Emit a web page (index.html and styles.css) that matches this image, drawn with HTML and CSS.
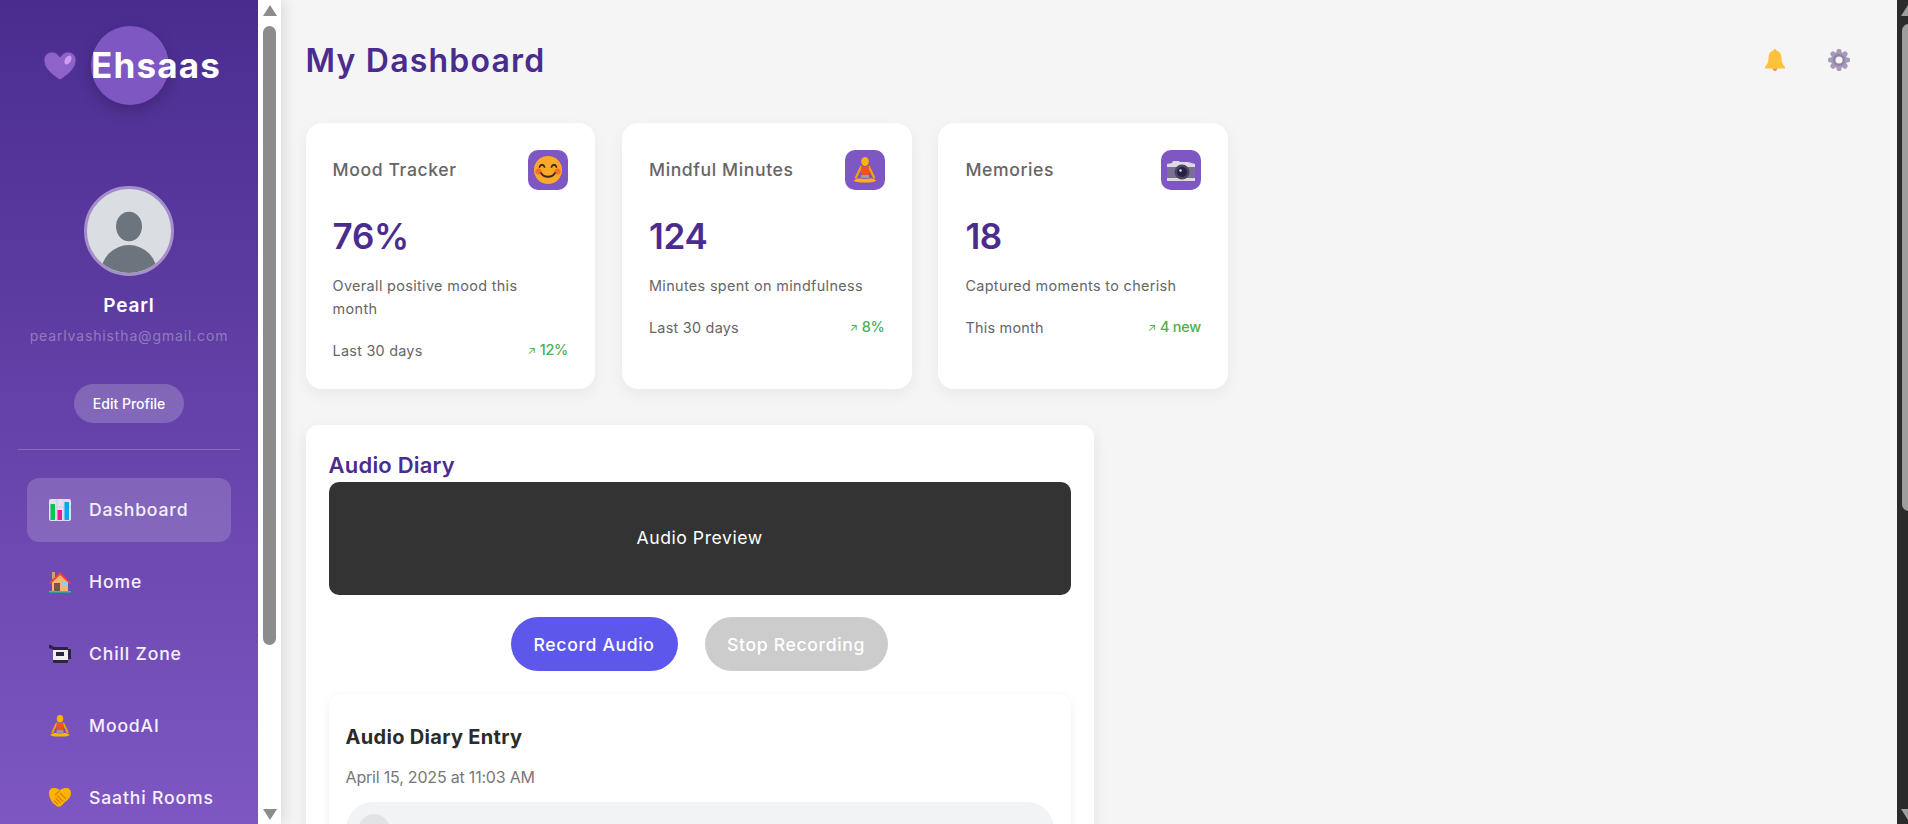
FILE: index.html
```html
<!DOCTYPE html>
<html lang="en">
<head>
  <meta charset="UTF-8">
  <meta name="viewport" content="width=device-width, initial-scale=1">
  <title>Ehsaas - My Dashboard</title>
  <link rel="stylesheet" href="styles.css">
</head>
<body>
  <svg class="defs" width="0" height="0">
    <symbol id="i-med" viewBox="4 3 24 26">
      <ellipse cx="16" cy="7.500" rx="3.800" ry="4.500" fill="#ffb300"/>
      <path d="M12 13 7 23.500" stroke="#ffa000" stroke-width="2.200" stroke-linecap="round"/>
      <path d="M20 13 25 23.500" stroke="#ffa000" stroke-width="2.200" stroke-linecap="round"/>
      <rect x="12" y="12.500" width="8" height="9" rx="1" fill="#f4511e"/>
      <rect x="12" y="21" width="8" height="3" fill="#9e9e9e"/>
      <path d="M4.500 26.500c3-2.500 7-2.500 11.500-1.500 4.500-1 8.500-1 11.500 1.500-3 2-7 2-11.500 2s-8.500 0-11.500-2z" fill="#ffb300"/>
    </symbol>
  </svg>

  <div class="side-wrap">
    <aside class="sidebar">
      <div class="logo">
        <svg class="logo-heart" viewBox="0 0 34 30">
          <path d="M17 29C8 23 1 17 1 9c0-5 4-8 8-8 3 0 6 2 8 5 2-3 5-5 8-5 4 0 8 3 8 8 0 8-7 14-16 20z" fill="#8e63c9" stroke="#5b36a8"/>
          <ellipse cx="25" cy="9" rx="3" ry="5" transform="rotate(30 25 9)" fill="#ce9df0"/>
        </svg>
        <div class="logo-mark"><span class="logo-text">Ehsaas</span></div>
      </div>

      <div class="profile">
        <div class="avatar">
          <svg viewBox="0 0 84 84">
            <ellipse cx="42" cy="37.500" rx="13" ry="14.700" fill="#6c757d"/>
            <circle cx="42" cy="84" r="28" fill="#6c757d"/>
          </svg>
        </div>
        <div class="name">Pearl</div>
        <div class="email">pearlvashistha@gmail.com</div>
        <button class="edit-btn">Edit Profile</button>
      </div>

      <nav class="nav">
        <a class="nav-item active">
          <svg class="nav-icon" viewBox="0 0 22 22">
            <rect width="22" height="22" rx="2" fill="#e4dff0"/>
            <path d="M0 8h22M8 0v22M15 0v22" stroke="#cfc8de" stroke-width="1"/>
            <rect x="1.500" y="5" width="4.500" height="16" fill="#00c853"/>
            <rect x="8.500" y="11" width="4.500" height="10" fill="#e91e8c"/>
            <rect x="15.500" y="3" width="4.500" height="18" fill="#03a9f4"/>
          </svg>
          <span>Dashboard</span>
        </a>
        <a class="nav-item">
          <svg class="nav-icon" viewBox="0 0 22 22">
            <rect x="3" y="1" width="3" height="7" fill="#d9a066"/>
            <path d="M3 10 11 3l8 7v10H3z" fill="#f3b574"/>
            <path d="M0 12 11 1l11 11-1.500 1L11 4 1.500 13z" fill="#f44336"/>
            <rect x="5" y="12" width="6" height="8" fill="#795548"/>
            <rect x="13" y="11" width="5" height="4" fill="#81d4fa"/>
            <rect y="20" width="22" height="1.500" fill="#00e676"/>
          </svg>
          <span>Home</span>
        </a>
        <a class="nav-item">
          <svg class="nav-icon" viewBox="0 0 22 22">
            <path d="M0 2h2l3 2v3L0 5z" fill="#2d2440"/>
            <rect x="4" y="4" width="15" height="16" rx="1" fill="#2d2440"/>
            <rect x="4" y="7" width="15" height="10" fill="#f0eef5"/>
            <rect x="7" y="9" width="8" height="4" fill="#2d2440"/>
            <rect x="19" y="6" width="3" height="10" fill="#2d2440"/>
          </svg>
          <span>Chill Zone</span>
        </a>
        <a class="nav-item">
          <svg class="nav-icon"><use href="#i-med"/></svg>
          <span>MoodAI</span>
        </a>
        <a class="nav-item">
          <svg class="nav-icon" viewBox="0 0 22 22">
            <path d="M0 6c0-3 2-5 5-5 3 0 4 1 6 2 2-1 3-2 6-2 3 0 5 2 5 5 0 4-3 7-6 9l-4 4c-1.500 1-3 1-4.500 0L4 16C2 14 0 10 0 6z" fill="#ffb300"/>
            <path d="M6 8l5-4.500M11 6l6 6M8 8.500l6 6M6.500 11l5 5M5 13.500l4 4" stroke="#d98200" stroke-width="1.200" fill="none"/>
          </svg>
          <span>Saathi Rooms</span>
        </a>
      </nav>
    </aside>
    <div class="scroll scroll-light">
      <i class="arrow up"></i>
      <div class="thumb"></div>
      <i class="arrow down"></i>
    </div>
  </div>

  <main class="main">
    <header class="topbar">
      <h1>My Dashboard</h1>
      <div class="top-icons">
        <svg class="top-icon" viewBox="0 0 22 22">
          <path d="M11 0c1 0 1.500.6 1.500 1.500C16 2.500 17.500 5.500 17.500 9c0 4 1 6 3.500 9v1.500H1V18c2.500-3 3.500-5 3.500-9 0-3.500 1.500-6.500 5-7.500C9.500.6 10 0 11 0z" fill="#fdc13a"/>
          <path d="M8.500 19.500h5C13 21 12 22 11 22s-2-1-2.500-2.500z" fill="#f9882c"/>
        </svg>
        <svg class="top-icon" viewBox="0 0 22 22">
          <g fill="#a69ab8">
            <circle cx="11" cy="11" r="8"/>
            <rect x="8.500" y="0" width="5" height="22" rx="2"/>
            <rect x="8.500" y="0" width="5" height="22" rx="2" transform="rotate(45 11 11)"/>
            <rect x="8.500" y="0" width="5" height="22" rx="2" transform="rotate(90 11 11)"/>
            <rect x="8.500" y="0" width="5" height="22" rx="2" transform="rotate(135 11 11)"/>
          </g>
          <circle cx="11" cy="11" r="6" fill="#8f82a6"/>
          <circle cx="11" cy="11" r="3.600" fill="#f5f5f5"/>
        </svg>
      </div>
    </header>

    <section class="cards">
      <div class="card">
        <div class="card-head">
          <span class="card-title">Mood Tracker</span>
          <span class="card-icon">
            <svg viewBox="0 0 32 32">
              <circle cx="16" cy="16" r="14" fill="#ffa726"/>
              <circle cx="6.500" cy="17.500" r="3" fill="#f4622e" opacity=".8"/>
              <circle cx="25.500" cy="17.500" r="3" fill="#f4622e" opacity=".8"/>
              <path d="M7.500 13c1-3 4-3 5 0M19.500 13c1-3 4-3 5 0M9 19c3 5 11 5 14 0" fill="none" stroke="#3a2a20" stroke-width="1.800" stroke-linecap="round"/>
            </svg>
          </span>
        </div>
        <div class="card-value">76%</div>
        <p class="card-desc">Overall positive mood this<br>month</p>
        <div class="card-foot">
          <span>Last 30 days</span>
          <span class="trend"><i>↗</i> <b>12%</b></span>
        </div>
      </div>
      <div class="card">
        <div class="card-head">
          <span class="card-title">Mindful Minutes</span>
          <span class="card-icon"><svg class="med"><use href="#i-med"/></svg></span>
        </div>
        <div class="card-value">124</div>
        <p class="card-desc">Minutes spent on mindfulness</p>
        <div class="card-foot">
          <span>Last 30 days</span>
          <span class="trend"><i>↗</i> <b>8%</b></span>
        </div>
      </div>
      <div class="card">
        <div class="card-head">
          <span class="card-title">Memories</span>
          <span class="card-icon">
            <svg viewBox="0 0 32 32">
              <path d="M2 10l5-1 1-2h6l1 1h8l7 2v17H2z" fill="#dcd8e6"/>
              <rect x="2" y="13" width="28" height="11" fill="#7a6f96"/>
              <circle cx="17" cy="18" r="7.500" fill="#4a4560"/>
              <circle cx="17" cy="18" r="5" fill="#2a1f45"/>
              <circle cx="15.500" cy="16.500" r="1.300" fill="#ddd"/>
            </svg>
          </span>
        </div>
        <div class="card-value">18</div>
        <p class="card-desc">Captured moments to cherish</p>
        <div class="card-foot">
          <span>This month</span>
          <span class="trend"><i>↗</i> <b>4 new</b></span>
        </div>
      </div>
    </section>

    <section class="panel">
      <h2>Audio Diary</h2>
      <div class="preview">Audio Preview</div>
      <div class="controls">
        <button class="btn btn-record">Record Audio</button>
        <button class="btn btn-stop">Stop Recording</button>
      </div>
      <div class="entry">
        <h3>Audio Diary Entry</h3>
        <div class="entry-date">April 15, 2025 at 11:03 AM</div>
        <div class="player"><span class="play"></span></div>
      </div>
    </section>
  </main>

  <div class="scroll scroll-dark">
    <i class="arrow up"></i>
    <div class="thumb"></div>
    <i class="arrow down"></i>
  </div>
</body>
</html>
```

FILE: styles.css
```css
* {
  box-sizing: border-box;
}
body {
  margin: 0;
  height: 824px;
  overflow: hidden;
  display: flex;
  font-family: Inter, "Open Sans", sans-serif;
  background: #f5f5f5;
  color: #333;
}
.defs {
  position: absolute;
}

/* sidebar */
.side-wrap {
  width: 281px;
  flex: none;
  display: flex;
  height: 824px;
  box-shadow: 4px 0 12px rgba(0,0,0,0.1);
  z-index: 2;
}
.sidebar {
  width: 258px;
  flex: none;
  height: 824px;
  overflow: hidden;
  background: linear-gradient(180deg, #4a2c8f, #7e57c2);
  color: #fff;
  padding-top: 26px;
}
.logo {
  display: flex;
  height: 79px;
  padding-left: 43px;
}
.logo-heart {
  width: 34px;
  height: 30px;
  margin-top: 25px;
  margin-right: 14px;
}
.logo-mark {
  width: 78px;
  height: 79px;
  border-radius: 50%;
  background: #7e57c2;
  box-shadow: 0 5px 15px rgba(0,0,0,0.2);
  display: flex;
  align-items: center;
}
.logo-text {
  font-size: 35px;
  font-weight: 700;
  line-height: 1;
  letter-spacing: 1.2px;
  margin-top: -1px;
}
.profile {
  display: flex;
  flex-direction: column;
  align-items: center;
  padding-top: 81px;
  height: 345px;
  border-bottom: 1px solid rgba(255,255,255,0.2);
  margin: 0 18px;
}
.avatar {
  width: 90px;
  height: 90px;
  border-radius: 50%;
  border: 3px solid #a48fcb;
  background: #dadde1;
  overflow: hidden;
}
.avatar svg {
  display: block;
  width: 84px;
  height: 84px;
}
.name {
  font-size: 19px;
  font-weight: 600;
  margin-top: 17px;
  line-height: 26px;
  letter-spacing: 0.8px;
}
.email {
  font-size: 14px;
  letter-spacing: 0.85px;
  color: rgba(255,255,255,0.33);
  margin-top: 6px;
  line-height: 22px;
  white-space: nowrap;
}
.edit-btn {
  margin-top: 37px;
  width: 110px;
  height: 39px;
  border: 0;
  border-radius: 20px;
  background: rgba(255,255,255,0.2);
  color: #fff;
  font: 500 14px Inter, sans-serif;
}
.nav {
  display: flex;
  flex-direction: column;
  gap: 8px;
  padding: 28px 27px 0;
}
.nav-item {
  display: flex;
  align-items: center;
  height: 64px;
  flex: none;
  padding-left: 22px;
  border-radius: 12px;
  font-size: 17.600px;
  font-weight: 500;
  letter-spacing: 0.85px;
  color: #f5f0fc;
}
.nav-item span {
  padding-bottom: 2px;
}
.nav-item.active {
  background: rgba(255,255,255,0.17);
}
.nav-icon {
  width: 22px;
  height: 22px;
  margin-right: 18px;
  flex: none;
}

/* fake scrollbars */
.scroll {
  flex: none;
  height: 824px;
  display: flex;
  flex-direction: column;
  align-items: center;
}
.scroll-light {
  width: 23px;
  background: #fff;
  padding: 5px 0 4px;
}
.scroll-dark {
  width: 11px;
  background: #2b2b2b;
  padding: 5px 0 4px 4px;
  align-items: flex-start;
}
.scroll .thumb {
  width: 13px;
  height: 619px;
  margin-top: 10px;
  border-radius: 7px;
  background: #8c8c8c;
  flex: none;
}
.scroll-dark .thumb {
  background: #9e9e9e;
  height: 487px;
  margin-top: 8px;
  margin-left: 1px;
}
.arrow {
  width: 0;
  height: 0;
  flex: none;
  border-left: 7.500px solid transparent;
  border-right: 7.500px solid transparent;
}
.arrow.up {
  border-bottom: 11px solid #8c8c8c;
}
.arrow.down {
  border-top: 11px solid #8c8c8c;
  margin-top: auto;
}
.scroll-dark .arrow.up {
  border-bottom-color: #9e9e9e;
}
.scroll-dark .arrow.down {
  border-top-color: #9e9e9e;
}

/* main */
.main {
  flex: 1;
  min-width: 0;
  height: 824px;
  overflow: hidden;
  padding: 0 0 0 24.600px;
}
.topbar {
  display: flex;
  justify-content: space-between;
  align-items: center;
  height: 123px;
  padding-bottom: 3px;
}
.topbar h1 {
  margin: 0;
  font-size: 32px;
  font-weight: 600;
  letter-spacing: 1.2px;
  color: #4a2c8f;
}
.top-icons {
  display: flex;
  gap: 42px;
  padding-right: 47px;
}
.top-icon {
  width: 22px;
  height: 22px;
}
.cards {
  display: grid;
  grid-template-columns: repeat(3, 289.600px);
  gap: 26.800px;
}
.card {
  background: #fff;
  border-radius: 16px;
  height: 266px;
  padding: 27px;
  box-shadow: 0 5px 15px rgba(0,0,0,0.05);
  display: flex;
  flex-direction: column;
}
.card-head {
  display: flex;
  justify-content: space-between;
  align-items: center;
  height: 40px;
}
.card-title {
  font-size: 17.600px;
  font-weight: 500;
  letter-spacing: 0.6px;
  color: #666;
  padding-bottom: 2px;
}
.card-icon {
  width: 40px;
  height: 40px;
  border-radius: 10px;
  background: #7e57c2;
  display: flex;
  align-items: center;
  justify-content: center;
}
.card-icon svg {
  width: 32px;
  height: 32px;
}
.card-icon .med {
  width: 24px;
  height: 26px;
}
.card-value {
  font-size: 35px;
  font-weight: 600;
  letter-spacing: -0.3px;
  color: #4a2c8f;
  margin-top: 22px;
  line-height: 48px;
}
.card-desc {
  margin: 14px 0 0;
  font-size: 14.400px;
  letter-spacing: 0.35px;
  line-height: 23px;
  color: #666;
}
.card-foot {
  display: flex;
  justify-content: space-between;
  align-items: center;
  margin-top: 18px;
  font-size: 14.400px;
  letter-spacing: 0.25px;
  line-height: 23px;
  color: #666;
}
.trend {
  color: #4caf50;
  letter-spacing: -0.2px;
}
.trend i {
  font-style: normal;
  font-size: 11px;
}
.trend b {
  font-weight: 500;
}

/* audio */
.panel {
  width: 788px;
  margin-top: 36px;
  background: #fff;
  border-radius: 12px;
  padding: 24px 23px;
  height: 500px;
  box-shadow: 0 5px 15px rgba(0,0,0,0.08);
}
.panel h2 {
  margin: 0;
  font-size: 22px;
  font-weight: 600;
  letter-spacing: 0.2px;
  line-height: 33px;
  color: #4a2c8f;
}
.preview {
  height: 113px;
  border-radius: 10px;
  background: #333;
  color: #fff;
  display: flex;
  align-items: center;
  justify-content: center;
  padding-bottom: 2px;
  font-size: 17.600px;
  letter-spacing: 0.55px;
}
.controls {
  display: flex;
  justify-content: center;
  gap: 27px;
  margin-top: 22px;
  padding-right: 1px;
}
.btn {
  height: 54px;
  border: 0;
  border-radius: 27px;
  color: #fff;
  font: 500 17.600px Inter, sans-serif;
  letter-spacing: 0.65px;
}
.btn-record {
  width: 167px;
  background: #5e57ec;
}
.btn-stop {
  width: 183px;
  background: #ccc;
}
.entry {
  margin-top: 23px;
  border-radius: 12px;
  padding: 26px 17px;
  box-shadow: 0 2px 8px rgba(0,0,0,0.06);
  height: 200px;
}
.entry h3 {
  margin: 0;
  font-size: 20px;
  font-weight: 700;
  letter-spacing: 0.3px;
  line-height: 34px;
  color: #2b2b2b;
}
.entry-date {
  margin-top: 11px;
  font-size: 16px;
  letter-spacing: -0.2px;
  line-height: 24px;
  color: #777;
}
.player {
  margin-top: 13px;
  height: 54px;
  border-radius: 27px;
  background: #f1f3f4;
  padding: 12px;
}
.play {
  display: block;
  width: 32px;
  height: 32px;
  border-radius: 50%;
  background: #e2e3e5;
}
```
